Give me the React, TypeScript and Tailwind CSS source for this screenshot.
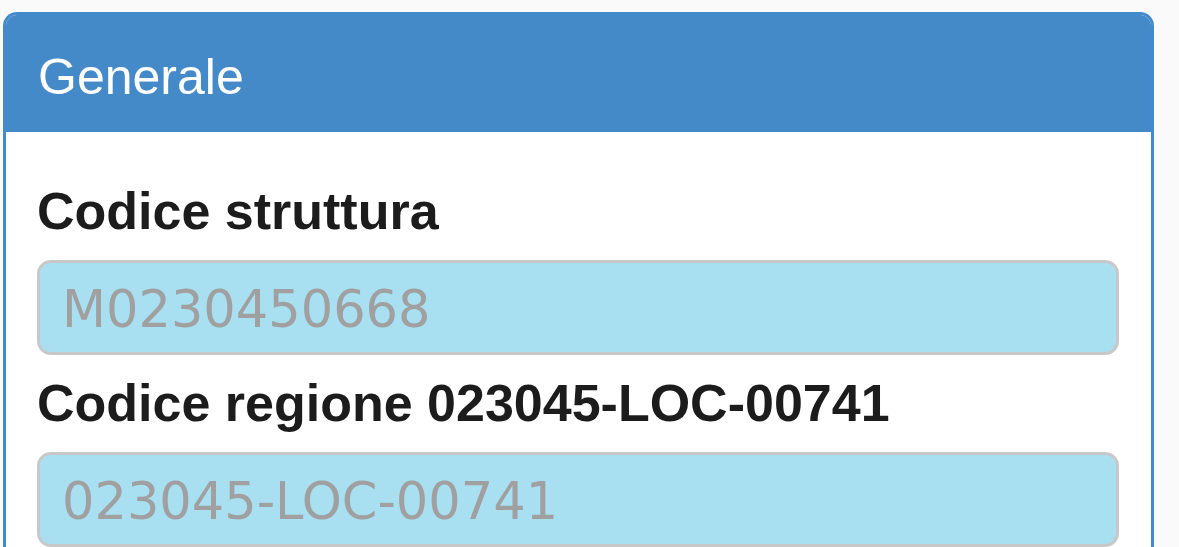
import React from 'react';

const fields = [
  { label: 'Codice struttura', value: 'M0230450668' },
  { label: 'Codice regione 023045-LOC-00741', value: '023045-LOC-00741' },
];

export default function App() {
  return (
    <div className="min-h-screen overflow-hidden bg-[#fafafa] pl-[3px] pt-[12px]">
      <div className="w-[1151px] overflow-hidden rounded-t-[14px] border-[3px] border-b-0 border-[#428bca] bg-white">
        {/* panel heading */}
        <div className="bg-[#448ac9] pl-[32px] pt-[33px] pb-[26px]">
          <h3
            className="text-[50px] leading-[58px] font-normal text-white"
            style={{ fontFamily: '"Liberation Sans", Arial, sans-serif' }}
          >
            Generale
          </h3>
        </div>

        {/* panel body */}
        <div className="px-[31px] pt-[50px] pb-[20px]">
          {fields.map((f, i) => (
            <div key={f.label} className={i === 0 ? '' : 'mt-[19px]'}>
              <label
                className="block text-[52px] leading-[58px] font-bold text-[#1c1c1c]"
                style={{ fontFamily: '"Liberation Sans", Arial, sans-serif' }}
              >
                {f.label}
              </label>
              <input
                readOnly
                placeholder={f.value}
                className="mt-[20px] block h-[95px] w-[1082px] rounded-[14px] border-[3px] border-[#c8c8c8] bg-[#a8e0f2] pl-[22px] pt-[4px] text-[51px] leading-none text-[#9e9e9e] outline-none placeholder:text-[#a0a0a0]"
                style={{ fontFamily: '"DejaVu Sans", Verdana, sans-serif' }}
              />
            </div>
          ))}
        </div>
      </div>
    </div>
  );
}
